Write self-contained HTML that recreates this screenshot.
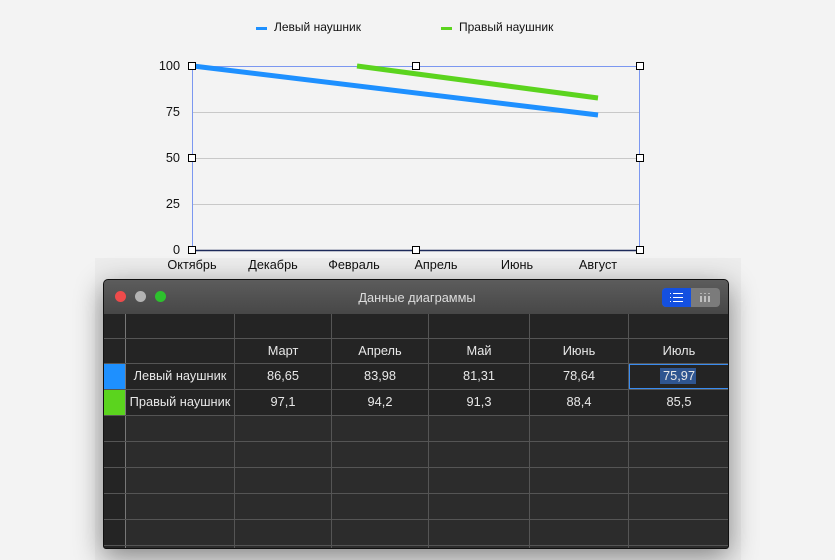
<!DOCTYPE html>
<html><head><meta charset="utf-8"><style>
body{margin:0;width:835px;height:560px;background:#f3f3f3;font-family:"Liberation Sans",sans-serif;position:relative;overflow:hidden}
.a{position:absolute}
.t{font-size:12px;color:#111}
.x{font-size:12.7px}
.h{position:absolute;width:6px;height:6px;border:1px solid #000;background:#fff}
.win{position:absolute;left:103px;top:279px;width:626px;height:270px;background:#2c2c2c;border-radius:5px 5px 3px 3px;box-shadow:0 8px 28px rgba(0,0,0,.45);overflow:hidden;border:1px solid #111;box-sizing:border-box}
.tb{position:absolute;left:0;top:0;width:100%;height:34px;background:linear-gradient(#5c5c5c,#474747);border-bottom:1px solid #6a6a6a}
.c{position:absolute;font-size:12.8px;color:#e8e8e8;text-align:center}
.vl{position:absolute;top:34px;bottom:0;width:1px;background:#555}
.hl{position:absolute;left:0;right:0;height:1px;background:#555}
</style></head><body>
<div class="a" style="left:95px;top:258px;width:646px;height:302px;background:#ececec"></div>
<div class="a" style="left:256px;top:27px;width:11px;height:3px;background:#1e90ff"></div>
<div class="a t" style="left:274px;top:20px">Левый наушник</div>
<div class="a" style="left:441px;top:27px;width:11px;height:3px;background:#5bd41e"></div>
<div class="a t" style="left:459px;top:20px">Правый наушник</div>
<svg class="a" style="left:0;top:0" width="835" height="280">
<g stroke="#c8c8c8" stroke-width="1"><line x1="192" y1="112.5" x2="640" y2="112.5"/><line x1="192" y1="158.5" x2="640" y2="158.5"/><line x1="192" y1="204.5" x2="640" y2="204.5"/></g>
<rect x="192.5" y="66.5" width="447" height="184" fill="none" stroke="#7b97f0" stroke-width="1"/>
<line x1="192" y1="250.5" x2="640" y2="250.5" stroke="#1d2a5a" stroke-width="1.5"/>
<line x1="193" y1="66" x2="598" y2="115" stroke="#1e90ff" stroke-width="5"/>
<line x1="357" y1="66" x2="598" y2="98" stroke="#5bd41e" stroke-width="5"/>
</svg>
<div class="h" style="left:188px;top:62px"></div><div class="h" style="left:412px;top:62px"></div><div class="h" style="left:636px;top:62px"></div>
<div class="h" style="left:188px;top:154px"></div><div class="h" style="left:636px;top:154px"></div>
<div class="h" style="left:188px;top:246px"></div><div class="h" style="left:412px;top:246px"></div><div class="h" style="left:636px;top:246px"></div>
<div class="a t x" style="left:150px;top:59px;width:30px;text-align:right">100</div>
<div class="a t x" style="left:150px;top:105px;width:30px;text-align:right">75</div>
<div class="a t x" style="left:150px;top:151px;width:30px;text-align:right">50</div>
<div class="a t x" style="left:150px;top:197px;width:30px;text-align:right">25</div>
<div class="a t x" style="left:150px;top:243px;width:30px;text-align:right">0</div>
<div class="a t x" style="left:152px;top:258px;width:80px;text-align:center">Октябрь</div>
<div class="a t x" style="left:233px;top:258px;width:80px;text-align:center">Декабрь</div>
<div class="a t x" style="left:314px;top:258px;width:80px;text-align:center">Февраль</div>
<div class="a t x" style="left:396px;top:258px;width:80px;text-align:center">Апрель</div>
<div class="a t x" style="left:477px;top:258px;width:80px;text-align:center">Июнь</div>
<div class="a t x" style="left:558px;top:258px;width:80px;text-align:center">Август</div>

<div class="win">
<div class="tb">
<div class="a" style="left:11px;top:11px;width:11px;height:11px;border-radius:50%;background:#ee4b4b"></div>
<div class="a" style="left:31px;top:11px;width:11px;height:11px;border-radius:50%;background:#b3b3b3"></div>
<div class="a" style="left:51px;top:11px;width:11px;height:11px;border-radius:50%;background:#2dc12d"></div>
<div class="a" style="left:0;top:10px;width:626px;text-align:center;color:#ddd;font-size:12.8px">Данные диаграммы</div>
<div class="a" style="left:558px;top:8px;width:58px;height:19px;border-radius:4px;background:#7b7b7b;overflow:hidden">
<div class="a" style="left:0;top:0;width:29px;height:19px;background:#1450e0"></div>
<svg class="a" style="left:0;top:0" width="58" height="19"><g stroke="#fff" stroke-width="1"><line x1="11" y1="5.5" x2="21" y2="5.5"/><line x1="11" y1="9.5" x2="21" y2="9.5"/><line x1="11" y1="13.5" x2="21" y2="13.5"/><line x1="8" y1="5.5" x2="9" y2="5.5"/><line x1="8" y1="9.5" x2="9" y2="9.5"/><line x1="8" y1="13.5" x2="9" y2="13.5"/></g>
<g stroke="#eee" stroke-width="1.2"><line x1="39" y1="8" x2="39" y2="14"/><line x1="43" y1="8" x2="43" y2="14"/><line x1="47" y1="8" x2="47" y2="14"/></g><g fill="#eee"><rect x="38.5" y="5" width="1" height="1"/><rect x="42.5" y="5" width="1" height="1"/><rect x="46.5" y="5" width="1" height="1"/></g></svg>
</div>
</div>
<div class="a" style="left:0;top:34px;width:626px;height:101px;background:#242424"></div>
<div class="a" style="left:0;top:34px;width:21px;height:240px;background:#242424"></div>
<div class="a" style="left:0;top:83px;width:21px;height:26px;background:#1e90ff"></div>
<div class="a" style="left:0;top:109px;width:21px;height:26px;background:#5bd41e"></div>
<div class="vl" style="left:21px;background:#777"></div><div class="vl" style="left:130px"></div><div class="vl" style="left:227px"></div><div class="vl" style="left:324px"></div><div class="vl" style="left:425px"></div><div class="vl" style="left:524px"></div>
<div class="hl" style="top:58px"></div><div class="hl" style="top:83px"></div><div class="hl" style="top:109px"></div><div class="hl" style="top:135px"></div><div class="hl" style="top:161px"></div><div class="hl" style="top:187px"></div><div class="hl" style="top:213px"></div><div class="hl" style="top:239px"></div><div class="hl" style="top:265px"></div>
<div class="c" style="left:131px;top:63px;width:96px">Март</div>
<div class="c" style="left:228px;top:63px;width:96px">Апрель</div>
<div class="c" style="left:325px;top:63px;width:100px">Май</div>
<div class="c" style="left:426px;top:63px;width:98px">Июнь</div>
<div class="c" style="left:525px;top:63px;width:100px">Июль</div>
<div class="c" style="left:22px;top:88px;width:108px">Левый наушник</div>
<div class="c" style="left:131px;top:88px;width:96px">86,65</div>
<div class="c" style="left:228px;top:88px;width:96px">83,98</div>
<div class="c" style="left:325px;top:88px;width:100px">81,31</div>
<div class="c" style="left:426px;top:88px;width:98px">78,64</div>
<div class="a" style="left:525px;top:84px;width:98px;height:23px;border:1px solid #3a8cf0"></div>
<div class="a" style="left:556px;top:88px;width:36px;height:16px;background:#2f5590"></div>
<div class="c" style="left:525px;top:88px;width:100px">75,97</div>
<div class="c" style="left:22px;top:114px;width:108px">Правый наушник</div>
<div class="c" style="left:131px;top:114px;width:96px">97,1</div>
<div class="c" style="left:228px;top:114px;width:96px">94,2</div>
<div class="c" style="left:325px;top:114px;width:100px">91,3</div>
<div class="c" style="left:426px;top:114px;width:98px">88,4</div>
<div class="c" style="left:525px;top:114px;width:100px">85,5</div>
</div>
</body></html>
